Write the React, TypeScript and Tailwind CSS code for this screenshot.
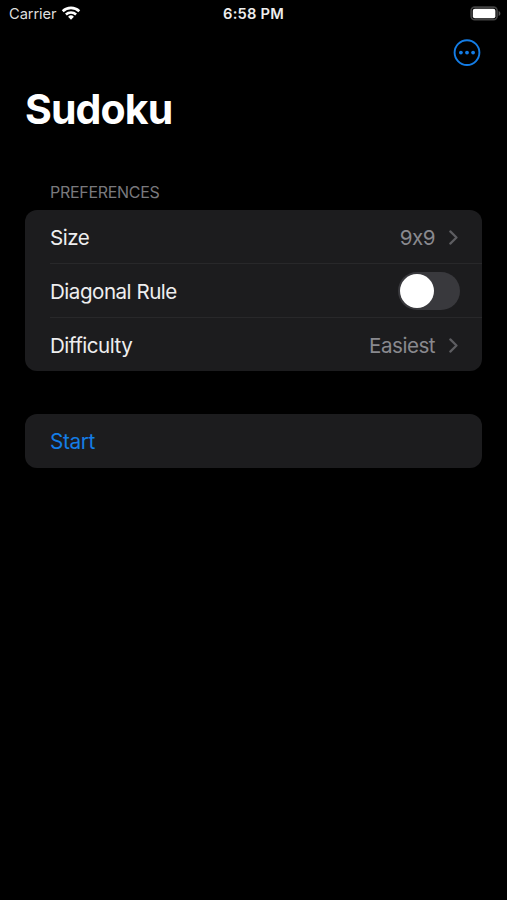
import { useState, type ReactNode } from "react";

function Chevron() {
  return (
    <svg className="mr-[2px] ml-[14px] h-[15px] w-[9px]" viewBox="0 0 9 15" fill="none" stroke="#5d5d61" strokeWidth="2.2" strokeLinecap="round" strokeLinejoin="round">
      <path d="M1.3 1.4 7.5 7.5 1.3 13.6" />
    </svg>
  );
}

function StatusBar() {
  return (
    <header className="grid h-7 grid-cols-3 items-center text-[14.7px] leading-7 text-[#dedede]">
      <div className="flex items-center pl-[9px]">
        <span className="tracking-[-0.1px]">Carrier</span>
        <svg className="mb-[2px] ml-[5px] h-[14px] w-[20px]" viewBox="0 0 20 14" fill="none" stroke="#fff" strokeWidth="2.6">
          <path d="M1.7 5.2a12 12 0 0 1 16.6 0" />
          <path d="M4.9 8.5a7.5 7.5 0 0 1 10.2 0" />
          <path d="M10 13.7 7.1 10.8a4.1 4.1 0 0 1 5.8 0Z" fill="#fff" stroke="none" />
        </svg>
      </div>
      <span className="text-center font-semibold tracking-[0.2px] text-[#ededed]">6:58 PM</span>
      <div className="flex justify-end pr-[6px] pb-[2px]">
        <svg className="h-[15px] w-[31px]" viewBox="0 0 31 15">
          <rect x="1.1" y="1.1" width="26" height="12.6" rx="3.6" fill="none" stroke="#434343" strokeWidth="1.6" />
          <rect x="2.8" y="2.8" width="22.6" height="9.4" rx="2" fill="#fff" />
          <path d="M28.6 5v5c1.2-.5 1.8-1.4 1.8-2.5S29.8 5.500 28.6 5Z" fill="#555" />
        </svg>
      </div>
    </header>
  );
}

function Row({ label, divider, children }: { label: string; divider?: boolean; children: ReactNode }) {
  return (
    <div className="pl-[25px]">
      <div className={divider ? "flex h-[54px] items-center justify-between border-b border-[#28282a] pr-[22px]" : "flex h-[53px] items-center justify-between pr-[22px]"}>
        <span className="pt-[3px] text-[#eeeeef]">{label}</span>
        {children}
      </div>
    </div>
  );
}

function Detail({ value }: { value: string }) {
  return (
    <span className="flex items-center pt-[3px] text-[#89898e]">
      {value}
      <Chevron />
    </span>
  );
}

export default function App() {
  const [diagonal, setDiagonal] = useState(false);
  return (
    <div className="min-h-[900px] w-full bg-black font-['Inter','Liberation_Sans',sans-serif]">
      <StatusBar />
      <nav className="flex h-[50px] items-center justify-end pr-[26px] pb-[1px]">
        <button aria-label="More" className="block">
          <svg className="h-[28px] w-[28px]" viewBox="0 0 28 28" fill="#147de6">
            <circle cx="14" cy="13.6" r="12.4" fill="none" stroke="#147de6" strokeWidth="1.9" />
            <circle cx="7.9" cy="13.6" r="1.9" />
            <circle cx="14" cy="13.6" r="1.9" />
            <circle cx="20.1" cy="13.6" r="1.9" />
          </svg>
        </button>
      </nav>
      <main className="px-[25px] pt-[6px]">
        <h1 className="text-[41px] leading-[50px] font-bold tracking-[-0.9px] text-white">Sudoku</h1>
        <h2 className="mt-[48px] h-[28px] pl-[25px] text-[16px] leading-[21px] tracking-[-0.3px] text-[#79797d]">PREFERENCES</h2>
        <section className="rounded-[12px] bg-[#1c1c1e] text-[20.6px] tracking-[-0.5px]">
          <Row label="Size" divider>
            <Detail value="9x9" />
          </Row>
          <Row label="Diagonal Rule" divider>
            <button
              role="switch"
              aria-checked={diagonal}
              aria-label="Diagonal Rule"
              onClick={() => setDiagonal(!diagonal)}
              className={diagonal ? "flex h-[38px] w-[62px] items-center justify-end rounded-full bg-[#30d158] p-[2px]" : "flex h-[38px] w-[62px] items-center rounded-full bg-[#39393d] p-[2px]"}
            >
              <span className="h-[34px] w-[34px] rounded-full bg-white" />
            </button>
          </Row>
          <Row label="Difficulty">
            <Detail value="Easiest" />
          </Row>
        </section>
        <button className="mt-[43px] flex h-[54px] w-full items-center rounded-[12px] bg-[#1c1c1e] pt-[2px] pl-[25px] text-[20.8px] tracking-[-0.4px] text-[#147de6]">
          Start
        </button>
      </main>
    </div>
  );
}
